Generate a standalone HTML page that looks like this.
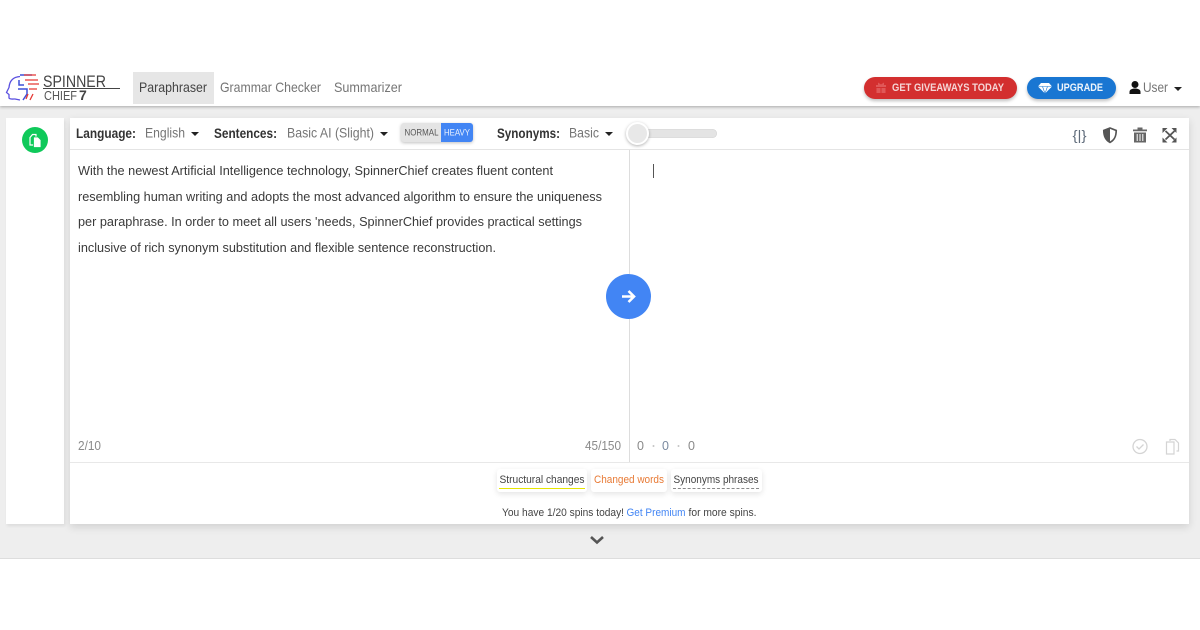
<!DOCTYPE html>
<html><head><meta charset="utf-8"><style>
html,body{margin:0;padding:0;width:1200px;height:630px;overflow:hidden;background:#fff}
body{position:relative;font-family:"Liberation Sans",sans-serif}
.a{position:absolute}
svg.t{position:absolute;left:0;top:0}
</style></head><body>
<div class="a" style="left:0;top:106px;width:1200px;height:453px;background:#eeeeee;border-bottom:1px solid #ddd;box-sizing:border-box"></div>
<div class="a" style="left:0;top:70px;width:1200px;height:36px;background:#fff;box-shadow:0 1px 3px rgba(0,0,0,.3);clip-path:inset(0 0 -10px 0)"></div>
<div class="a" style="left:133px;top:72px;width:81px;height:32px;background:#e6e6e6"></div>
<div class="a" style="left:6px;top:118px;width:58px;height:406px;background:#fff;box-shadow:1px 2px 3px rgba(0,0,0,.08)"></div>
<div class="a" style="left:70px;top:118px;width:1119px;height:406px;background:#fff;box-shadow:0 3px 8px rgba(0,0,0,.13)"></div>
<div class="a" style="left:70px;top:149px;width:1119px;height:1px;background:#e4e4e4"></div>
<div class="a" style="left:70px;top:462px;width:1119px;height:1px;background:#e8e8e8"></div>
<div class="a" style="left:629px;top:150px;width:1px;height:312px;background:#ddd"></div>
<div class="a" style="left:22px;top:127px;width:26px;height:26px;border-radius:50%;background:#0fc95a"></div>
<div class="a" style="left:864px;top:77px;width:153px;height:22px;border-radius:11px;background:#d32f2f;box-shadow:0 2px 3px rgba(0,0,0,.25)"></div>
<div class="a" style="left:1027px;top:77px;width:89px;height:22px;border-radius:11px;background:#1976d2;box-shadow:0 2px 3px rgba(0,0,0,.25)"></div>
<div class="a" style="left:401px;top:123px;width:72px;height:19px;border-radius:3px;background:#e4e4e4;box-shadow:0 1px 3px rgba(0,0,0,.25)"></div>
<div class="a" style="left:441px;top:123px;width:32px;height:19px;border-radius:0 3px 3px 0;background:#4285f4"></div>
<div class="a" style="left:630px;top:129px;width:87px;height:9px;border-radius:5px;background:#e4e4e4;box-shadow:inset 0 0 1px rgba(0,0,0,.2)"></div>
<div class="a" style="left:626px;top:122px;width:19px;height:19px;border-radius:50%;background:#e8e8e8;border:2px solid #fff;box-shadow:0 1px 3px rgba(0,0,0,.3)"></div>
<div class="a" style="left:606px;top:274px;width:45px;height:45px;border-radius:50%;background:#4285f4"></div>
<div class="a" style="left:497px;top:469px;width:90px;height:23px;background:#fff;border-radius:3px;box-shadow:0 2px 6px rgba(0,0,0,.11)"></div>
<div class="a" style="left:591px;top:469px;width:76px;height:23px;background:#fff;border-radius:3px;box-shadow:0 2px 6px rgba(0,0,0,.11)"></div>
<div class="a" style="left:671px;top:469px;width:91px;height:23px;background:#fff;border-radius:3px;box-shadow:0 2px 6px rgba(0,0,0,.11)"></div>
<div class="a" style="left:499px;top:488px;width:86px;height:1px;background:#e6e600"></div>
<div class="a" style="left:673px;top:488px;width:86px;height:0;border-top:1px dashed #888"></div>

<svg class="t" width="1200" height="630" viewBox="0 0 1200 630" font-family="'Liberation Sans',sans-serif">
<!-- logo -->
<g fill="none">
<path d="M20 76.500C13 77 9.500 81 9 87.500L6.500 92.500 9 94.500V98C10 99.500 13 99 15 99L20 100" stroke="#5a50e0" stroke-width="1.300"/>
<path d="M20 75H32M19 80V85H24M18 89H27L27 94M23 100L27 94" stroke="#3f51d8" stroke-width="1.500"/>
<path d="M24 75H36M25 80H38M28 84H39M29 89H37M28 94L26 99M30 100L33 94" stroke="#e53935" stroke-width="1.300"/>
<path d="M43 88.500H120" stroke="#444"/>
</g>
<text x="43" y="87" font-size="16.500" fill="#444" textLength="63" lengthAdjust="spacingAndGlyphs">SPINNER</text>
<text x="44" y="100" font-size="13" fill="#555" textLength="33" lengthAdjust="spacingAndGlyphs">CHIEF</text>
<text x="79" y="100" font-size="14" font-weight="bold" fill="#444">7</text>
<!-- nav -->
<g font-size="13.800" fill="#757575">
<text x="139" y="92" fill="#444" textLength="68" lengthAdjust="spacingAndGlyphs">Paraphraser</text>
<text x="220" y="92" textLength="101" lengthAdjust="spacingAndGlyphs">Grammar Checker</text>
<text x="334" y="92" textLength="68" lengthAdjust="spacingAndGlyphs">Summarizer</text>
<text x="1143" y="92" textLength="25" lengthAdjust="spacingAndGlyphs">User</text>
</g>
<path d="M1174 87h8l-4 4z" fill="#222"/>
<!-- buttons -->
<g font-size="11" font-weight="bold" fill="#fff" opacity=".92">
<text x="892" y="91" textLength="112" lengthAdjust="spacingAndGlyphs" fill="#f8e4e4">GET GIVEAWAYS TODAY</text>
<text x="1057" y="91" textLength="46" lengthAdjust="spacingAndGlyphs">UPGRADE</text>
</g>
<path d="M876 85h10v2h-10zM876.500 88h4v5h-4zM881.500 88h4v5h-4zM878 82.500l3 2 3-2v2.500h-6z" fill="#e05858"/>
<path d="M1041 83h8l3 3.500-7 7-7-7z" fill="#fff"/>
<path d="M1038 86.500h14M1042.500 86.500l2.500 7 2.500-7" stroke="#1976d2" stroke-width=".6" fill="none"/>
<circle cx="1135" cy="84.500" r="3.500" fill="#111"/>
<path d="M1129.500 94v-2c0-2.500 2.500-3.500 5.500-3.500s5.500 1 5.500 3.500v2z" fill="#111"/>
<!-- green icon: two overlapping pages -->
<path d="M30 137.500l2.500-3h3.500v10.500h-6z" fill="none" stroke="#fff" stroke-width="1.200"/>
<path d="M33.500 137h4.500l3 3v7.500h-7.500z" fill="#fff" stroke="#0fc95a" stroke-width=".8"/>
<!-- toolbar -->
<g font-size="13.500" font-weight="bold" fill="#333">
<text x="76" y="138" textLength="60" lengthAdjust="spacingAndGlyphs">Language:</text>
<text x="214" y="138" textLength="63" lengthAdjust="spacingAndGlyphs">Sentences:</text>
<text x="497" y="138" textLength="63" lengthAdjust="spacingAndGlyphs">Synonyms:</text>
</g>
<g font-size="13.800" fill="#757575">
<text x="145" y="137.500" textLength="40" lengthAdjust="spacingAndGlyphs">English</text>
<text x="287" y="137.500" textLength="87" lengthAdjust="spacingAndGlyphs">Basic AI (Slight)</text>
<text x="569" y="137.500" textLength="30" lengthAdjust="spacingAndGlyphs">Basic</text>
</g>
<path d="M191 132h8l-4 4zM380 132h8l-4 4zM605 132h8l-4 4z" fill="#222"/>
<text x="404.500" y="135.500" font-size="8.800" fill="#555" textLength="34" lengthAdjust="spacingAndGlyphs">NORMAL</text>
<text x="444" y="135.500" font-size="8.800" fill="#e8f0fe" textLength="26" lengthAdjust="spacingAndGlyphs">HEAVY</text>
<!-- right icons -->
<text x="1072.500" y="140" font-size="13.500" fill="#5f6b7a" textLength="14" lengthAdjust="spacingAndGlyphs">{|}</text>
<path d="M1110 128l6.200 2.400c0 5.800-1.500 9.600-6.200 12-4.700-2.400-6.200-6.200-6.200-12z" fill="#fff" stroke="#555" stroke-width="1.700"/>
<path d="M1110 128.500v13.500c-3.800-2-5.700-5.700-5.700-11.200z" fill="#555"/>
<path d="M1133 129.500h14v1.800h-14zM1137.500 127.500h5v2h-5zM1134 132.500h12v10h-12z" fill="#666"/>
<path d="M1137.200 134v7M1140 134v7M1142.800 134v7" stroke="#fff" stroke-width="1"/>
<path d="M1165.500 131l9 8.500M1174.500 131l-9 8.500" fill="none" stroke="#555" stroke-width="1.800"/>
<path d="M1162.500 128h5l-5 5zM1176.500 128h-5l5 5zM1162.500 142.500h5l-5-5zM1176.500 142.500h-5l5-5z" fill="#555"/>
<!-- body text -->
<g font-size="12.500" fill="#3a3a3a">
<text x="78" y="175" textLength="475" lengthAdjust="spacingAndGlyphs">With the newest Artificial Intelligence technology, SpinnerChief creates fluent content</text>
<text x="78" y="201" textLength="524" lengthAdjust="spacingAndGlyphs">resembling human writing and adopts the most advanced algorithm to ensure the uniqueness</text>
<text x="78" y="226" textLength="504" lengthAdjust="spacingAndGlyphs">per paraphrase. In order to meet all users 'needs, SpinnerChief provides practical settings</text>
<text x="78" y="252" textLength="418" lengthAdjust="spacingAndGlyphs">inclusive of rich synonym substitution and flexible sentence reconstruction.</text>
</g>
<path d="M653.500 164v14" stroke="#555" stroke-width="1"/>
<!-- arrow -->
<path d="M622 296.500h12M628.500 291l5.500 5.500-5.500 5.500" stroke="#fff" stroke-width="2.600" fill="none"/>
<!-- counters -->
<g font-size="12.500" fill="#8a8a8a">
<text x="78" y="450" textLength="23" lengthAdjust="spacingAndGlyphs">2/10</text>
<text x="585" y="450" textLength="36" lengthAdjust="spacingAndGlyphs">45/150</text>
<text x="637" y="450">0</text><text x="662" y="450" fill="#7a8aa0">0</text><text x="688" y="450">0</text>
</g>
<circle cx="653.500" cy="446" r="1" fill="#c4c4c4"/><circle cx="678.500" cy="446" r="1" fill="#c4c4c4"/>
<circle cx="1140" cy="446.500" r="7" fill="none" stroke="#d4d4d4" stroke-width="1.300"/>
<path d="M1136.500 446.500l2.500 2.500 4.500-4.500" fill="none" stroke="#d4d4d4" stroke-width="1.300"/>
<path d="M1170 441v-1.500h5l3.500 3.500v8h-2M1166.500 442h7.500v12h-7.500z" fill="#fff" stroke="#d4d4d4" stroke-width="1.200"/>
<!-- legend -->
<g font-size="11" fill="#444">
<text x="499.500" y="483" textLength="85" lengthAdjust="spacingAndGlyphs">Structural changes</text>
<text x="594" y="483" fill="#e87a35" textLength="70" lengthAdjust="spacingAndGlyphs">Changed words</text>
<text x="673.500" y="483" textLength="85" lengthAdjust="spacingAndGlyphs">Synonyms phrases</text>
<text x="502" y="516" textLength="122" lengthAdjust="spacingAndGlyphs">You have 1/20 spins today!</text>
<text x="626.500" y="516" fill="#4285f4" textLength="59" lengthAdjust="spacingAndGlyphs">Get Premium</text>
<text x="688.500" y="516" textLength="68" lengthAdjust="spacingAndGlyphs">for more spins.</text>
</g>
<path d="M591 537l6 5.500 6-5.500" fill="none" stroke="#555" stroke-width="2.600"/>
</svg>
</body></html>
